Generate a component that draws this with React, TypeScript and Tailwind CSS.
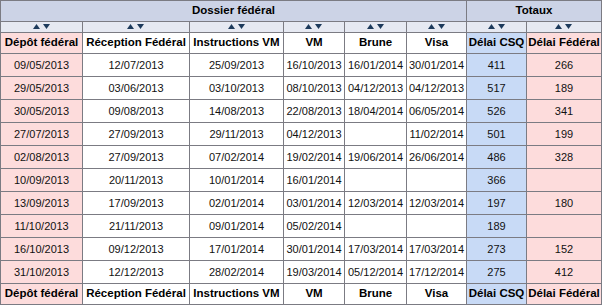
import React from "react";

const rows: string[][] = [
  ["09/05/2013", "12/07/2013", "25/09/2013", "16/10/2013", "16/01/2014", "30/01/2014", "411", "266"],
  ["29/05/2013", "03/06/2013", "03/10/2013", "08/10/2013", "04/12/2013", "04/12/2013", "517", "189"],
  ["30/05/2013", "09/08/2013", "14/08/2013", "22/08/2013", "18/04/2014", "06/05/2014", "526", "341"],
  ["27/07/2013", "27/09/2013", "29/11/2013", "04/12/2013", "", "11/02/2014", "501", "199"],
  ["02/08/2013", "27/09/2013", "07/02/2014", "19/02/2014", "19/06/2014", "26/06/2014", "486", "328"],
  ["10/09/2013", "20/11/2013", "10/01/2014", "16/01/2014", "", "", "366", ""],
  ["13/09/2013", "17/09/2013", "02/01/2014", "03/01/2014", "12/03/2014", "12/03/2014", "197", "180"],
  ["11/10/2013", "21/11/2013", "09/01/2014", "05/02/2014", "", "", "189", ""],
  ["16/10/2013", "09/12/2013", "17/01/2014", "30/01/2014", "17/03/2014", "17/03/2014", "273", "152"],
  ["31/10/2013", "12/12/2013", "28/02/2014", "19/03/2014", "05/12/2014", "17/12/2014", "275", "412"],
];

const headers = [
  "Dépôt fédéral",
  "Réception Fédéral",
  "Instructions VM",
  "VM",
  "Brune",
  "Visa",
  "Délai CSQ",
  "Délai Fédéral",
];

const widths = [82, 107, 94, 61, 62, 60, 60, 75];

function bgFor(i: number) {
  if (i === 0 || i === 7) return "bg-[#fddcdc]";
  if (i === 6) return "bg-[#c8daf6]";
  return "bg-white";
}

function Arrows() {
  return (
    <svg width="18" height="6" viewBox="0 0 18 6" className="inline-block">
      <polygon points="0,5 3.5,0 7,5" fill="#1d3a5c" />
      <polygon points="10,0 17,0 13.5,5" fill="#1d3a5c" />
    </svg>
  );
}

function HeaderRow() {
  return (
    <tr className="h-[21px]">
      {headers.map((h, i) => (
        <th
          key={i}
          className={`border border-[#7b7b83] ${bgFor(i)} px-0 py-0 text-center font-bold text-[11.5px] text-black whitespace-nowrap`}
        >
          {h}
        </th>
      ))}
    </tr>
  );
}

export default function App() {
  return (
    <div className="w-[603px] h-[306px] bg-white" style={{ fontFamily: '"Liberation Sans", Arial, sans-serif' }}>
      <table className="border-collapse table-fixed w-[602px]">
        <colgroup>
          {widths.map((w, i) => (
            <col key={i} style={{ width: w }} />
          ))}
        </colgroup>
        <thead>
          <tr className="h-[21px]">
            <th colSpan={6} className="border border-[#7b7b83] bg-[#ccd3e6] p-0 text-center font-bold text-[11.5px] text-black">
              Dossier fédéral
            </th>
            <th colSpan={2} className="border border-[#7b7b83] bg-[#ccd3e6] p-0 text-center font-bold text-[11.5px] text-black">
              Totaux
            </th>
          </tr>
          <tr className="h-[11px]">
            {widths.map((_, i) => (
              <th key={i} className="border border-[#7b7b83] bg-[#e6e9f2] p-0 h-[11px] leading-[0]">
                <Arrows />
              </th>
            ))}
          </tr>
          <HeaderRow />
        </thead>
        <tbody>
          {rows.map((r, ri) => (
            <tr key={ri} className="h-[23px]">
              {r.map((c, ci) => (
                <td
                  key={ci}
                  className={`border border-[#7b7b83] ${bgFor(ci)} p-0 text-center text-[11px] text-[#111]`}
                >
                  {c}
                </td>
              ))}
            </tr>
          ))}
          <HeaderRow />
        </tbody>
      </table>
    </div>
  );
}
